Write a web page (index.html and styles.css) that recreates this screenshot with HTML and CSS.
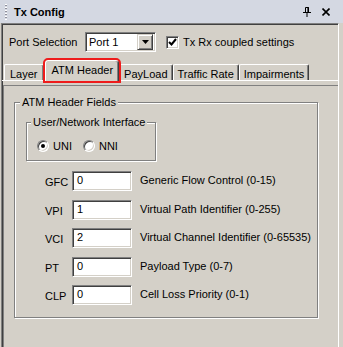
FILE: index.html
```html
<!DOCTYPE html>
<html lang="en">
<head>
    <meta charset="UTF-8">
    <meta name="viewport" content="width=device-width, initial-scale=1.0">
    <title>Tx Config</title>
    <link rel="stylesheet" href="styles.css">
</head>
<body>
    <div class="window">
        <div class="titlebar">
            <span class="grip"></span>
            <span class="title">Tx Config</span>
            <span class="title-btns">
                <svg class="pin" width="9" height="10" viewBox="0 0 9 10">
                    <path d="M2.5 0.5h3v5h-3z" fill="none" stroke="#000"/>
                    <path d="M5 0v6" stroke="#000" stroke-width="1.2"/>
                    <path d="M0 5.5h8" stroke="#000"/>
                    <path d="M4 6v4" stroke="#000"/>
                </svg>
                <svg class="close" width="8" height="8" viewBox="0 0 8 8">
                    <path d="M0.5 0.5l7 7M7.5 0.5l-7 7" stroke="#000" stroke-width="1.6"/>
                </svg>
            </span>
        </div>

        <div class="frame">
            <div class="port-row">
                <span class="port-label">Port Selection</span>
                <div class="combo">
                    <span class="combo-text">Port 1</span>
                    <span class="combo-btn">
                        <svg width="7" height="4" viewBox="0 0 7 4"><path d="M0 0h7L3.5 4z" fill="#000"/></svg>
                    </span>
                </div>
                <label class="check">
                    <span class="checkbox">
                        <svg width="9" height="9" viewBox="0 0 9 9"><path d="M1 4l2.5 2.5L8 1" fill="none" stroke="#000" stroke-width="2"/></svg>
                    </span>
                    Tx Rx coupled settings
                </label>
            </div>

            <div class="tabs">
                <span class="tab">Layer</span>
                <span class="tab active">ATM Header</span>
                <span class="tab">PayLoad</span>
                <span class="tab">Traffic Rate</span>
                <span class="tab">Impairments</span>
            </div>

            <div class="tabpage">
                <div class="page">
                    <fieldset class="group">
                        <legend>ATM Header Fields</legend>

                        <fieldset class="group sub">
                            <legend>User/Network Interface</legend>
                            <div class="radios">
                                <label class="radio"><span class="dot on"></span>UNI</label>
                                <label class="radio"><span class="dot"></span>NNI</label>
                            </div>
                        </fieldset>

                        <div class="fields">
                            <span class="f-label">GFC</span>
                            <span class="input">0</span>
                            <span class="f-desc">Generic Flow Control (0-15)</span>

                            <span class="f-label">VPI</span>
                            <span class="input">1</span>
                            <span class="f-desc">Virtual Path Identifier (0-255)</span>

                            <span class="f-label">VCI</span>
                            <span class="input">2</span>
                            <span class="f-desc">Virtual Channel Identifier (0-65535)</span>

                            <span class="f-label">PT</span>
                            <span class="input">0</span>
                            <span class="f-desc">Payload Type (0-7)</span>

                            <span class="f-label">CLP</span>
                            <span class="input">0</span>
                            <span class="f-desc">Cell Loss Priority (0-1)</span>
                        </div>
                    </fieldset>
                </div>
            </div>
        </div>
    </div>
</body>
</html>
```

FILE: styles.css
```css
body {
    margin: 0;
    width: 343px;
    height: 347px;
    overflow: hidden;
    background: #d4d0c8;
    font-family: "Liberation Sans", Arial, sans-serif;
    font-size: 11px;
    color: #000;
}
.window {
    display: flex;
    flex-direction: column;
    height: 347px;
}

/* title bar */
.titlebar {
    height: 23px;
    flex: none;
    display: flex;
    align-items: center;
    padding-left: 5px;
    background: #d4d8e2;
}
.grip {
    width: 2px;
    height: 16px;
    background: repeating-linear-gradient(to bottom, #fff 0 1px, #8f8f9a 1px 2px, transparent 2px 3px);
}
.title {
    margin-left: 7px;
    font-weight: bold;
}
.title-btns {
    margin-left: auto;
    margin-right: 13px;
    display: flex;
    align-items: center;
    gap: 10px;
}
.pin {
    margin-top: 1px;
}

/* frame */
.frame {
    flex: 1;
    width: 338px;
    margin-left: 1px;
    box-sizing: border-box;
    border-top: 1px solid #808080;
    border-left: 1px solid #808080;
    border-right: 1px solid #fff;
    box-shadow: inset 1px 1px 0 #404040;
    display: flex;
    flex-direction: column;
}
.port-row {
    display: flex;
    align-items: center;
    height: 20px;
    margin-top: 8px;
    padding-left: 7px;
}
.port-label {
    width: 76px;
}
.combo {
    width: 71px;
    height: 20px;
    box-sizing: border-box;
    display: flex;
    align-items: center;
    background: #fff;
    border: 1px solid;
    border-color: #808080 #fff #fff #808080;
    box-shadow: inset 1px 1px 0 #404040, inset -1px -1px 0 #d4d0c8;
    padding: 2px 2px 2px 3px;
}
.combo-text {
    flex: 1;
}
.combo-btn {
    width: 16px;
    height: 16px;
    box-sizing: border-box;
    display: flex;
    align-items: center;
    justify-content: center;
    background: #d4d0c8;
    border: 1px solid;
    border-color: #d4d0c8 #404040 #404040 #d4d0c8;
    box-shadow: inset 1px 1px 0 #fff, inset -1px -1px 0 #808080;
}
.check {
    display: flex;
    align-items: center;
    margin-left: 10px;
}
.checkbox {
    width: 13px;
    height: 13px;
    box-sizing: border-box;
    margin-right: 4px;
    display: flex;
    align-items: center;
    justify-content: center;
    background: #fff;
    border: 1px solid;
    border-color: #808080 #fff #fff #808080;
    box-shadow: inset 1px 1px 0 #404040, inset -1px -1px 0 #d4d0c8;
}

/* tabs */
.tabs {
    display: flex;
    align-items: flex-end;
    height: 20px;
    margin-top: 8px;
    padding-left: 2px;
}
.tab {
    height: 16px;
    box-sizing: border-box;
    padding: 2px 4px 0 4px;
    line-height: 14px;
    white-space: nowrap;
    border-left: 1px solid #fff;
    border-top: 1px solid #fff;
    border-right: 1px solid #404040;
    box-shadow: inset -1px 0 0 #808080;
    border-radius: 2px 2px 0 0;
}
.tab:first-child {
    padding: 2px 5px 0 5px;
    margin-right: 1px;
}
.tab.active {
    height: 21px;
    margin-bottom: -1px;
    padding: 0 5px 0 6px;
    line-height: 18px;
    background: #d4d0c8;
    position: relative;
    z-index: 1;
    outline: 2px solid #ee1c1c;
    outline-offset: 0;
    border-radius: 3px 3px 0 0;
}
.tabpage {
    flex: 1;
    border-top: 1px solid #fff;
    display: flex;
    flex-direction: column;
}
.page {
    flex: 1;
    margin-top: 4px;
    margin-left: 1px;
    border-top: 1px solid #808080;
    border-left: 1px solid #808080;
}

/* group boxes */
.group {
    margin: 10px 0 0 10px;
    width: 304px;
    min-width: 0;
    box-sizing: border-box;
    padding: 0 0 12px 0;
    border: 1px solid #808080;
    box-shadow: inset 1px 1px 0 #fff, 1px 1px 0 #fff;
}
.group legend {
    margin-left: 5px;
    padding: 0 2px;
    line-height: 13px;
    white-space: nowrap;
    background: #d4d0c8;
}
.group.sub {
    margin: 7px 0 0 11px;
    width: 130px;
    padding: 10px 0 7px 10px;
}
.group.sub legend {
    margin-left: -6px;
}
.radios {
    display: flex;
    align-items: center;
    height: 14px;
    gap: 11px;
}
.radio {
    display: flex;
    align-items: center;
}
.dot {
    width: 12px;
    height: 12px;
    box-sizing: border-box;
    margin-right: 4px;
    border-radius: 50%;
    background: #fff;
    border: 1px solid;
    border-color: #808080 #fff #fff #808080;
    box-shadow: inset 1px 1px 0 #404040, inset -1px -1px 0 #d4d0c8;
    display: flex;
    align-items: center;
    justify-content: center;
}
.dot.on::after {
    content: "";
    width: 4px;
    height: 4px;
    border-radius: 50%;
    background: #000;
}

/* field rows */
.fields {
    display: grid;
    grid-template-columns: 27px 60px auto;
    grid-auto-rows: 20px;
    row-gap: 8.5px;
    align-items: center;
    margin-top: 10px;
    padding-left: 30px;
}
.f-label {
    padding-top: 2px;
}
.input {
    height: 20px;
    box-sizing: border-box;
    padding: 0 3px;
    line-height: 16px;
    background: #fff;
    border: 1px solid;
    border-color: #808080 #fff #fff #808080;
    box-shadow: inset 1px 1px 0 #404040, inset -1px -1px 0 #d4d0c8;
    padding-left: 4px;
}
.f-desc {
    padding-left: 8px;
    margin-top: -2px;
}
```
